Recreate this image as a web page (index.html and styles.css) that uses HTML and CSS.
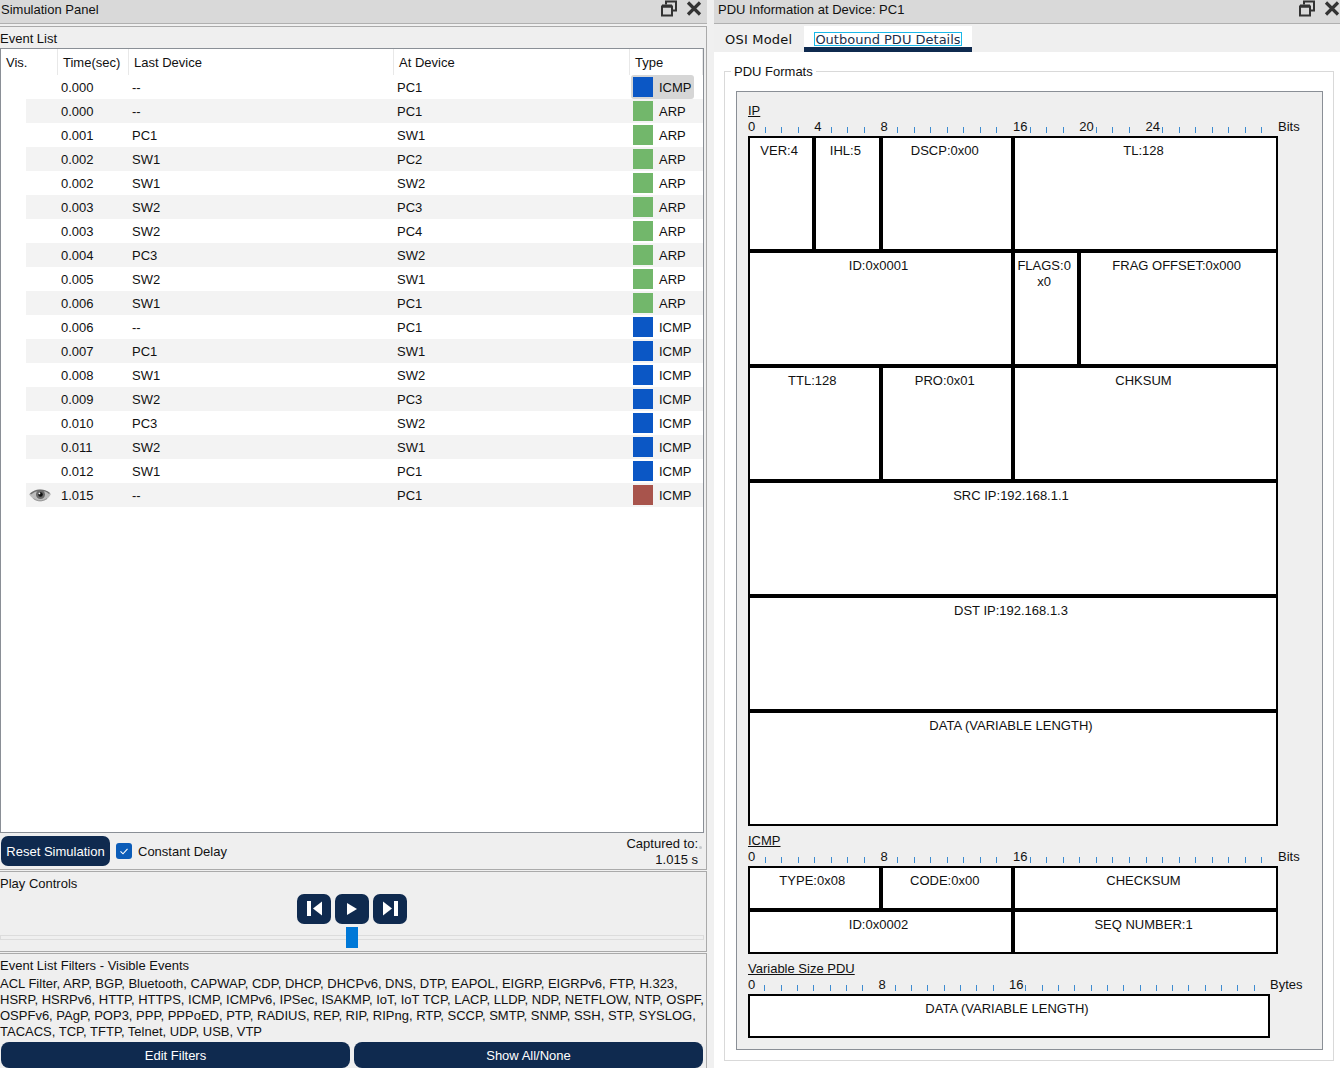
FILE: index.html
```html
<!DOCTYPE html>
<html lang="en">
<head>
<meta charset="utf-8">
<title>Simulation Panel</title>
<link rel="stylesheet" href="styles.css">
</head>
<body>
<div class="app">
  <section class="sim">
    <header class="titlebar">
      <span class="title">Simulation Panel</span>
      <span class="winbtns">
        <svg class="ico" viewBox="0 0 16 16"><path d="M5 4V1h10v9h-4" fill="none" stroke="#333" stroke-width="2"/><path d="M1 6h10v9H1z" fill="none" stroke="#333" stroke-width="2"/><path d="M1 5.500h10" stroke="#333" stroke-width="3"/></svg>
        <svg class="ico" viewBox="0 0 16 16"><path d="M2 2l12 12M14 2L2 14" stroke="#333" stroke-width="3.200" fill="none"/></svg>
      </span>
    </header>
    <div class="event-group">
      <div class="glabel evlabel">Event List</div>
      <div class="table">
        <div class="thead"><span>Vis.</span><span>Time(sec)</span><span>Last Device</span><span>At Device</span><span>Type</span></div>
        <div class="row"><span></span><span>0.000</span><span>--</span><span>PC1</span><span class="ty chip"><i class="sw icmp"></i>ICMP</span></div>
        <div class="row alt"><span></span><span>0.000</span><span>--</span><span>PC1</span><span class="ty"><i class="sw arp"></i>ARP</span></div>
        <div class="row"><span></span><span>0.001</span><span>PC1</span><span>SW1</span><span class="ty"><i class="sw arp"></i>ARP</span></div>
        <div class="row alt"><span></span><span>0.002</span><span>SW1</span><span>PC2</span><span class="ty"><i class="sw arp"></i>ARP</span></div>
        <div class="row"><span></span><span>0.002</span><span>SW1</span><span>SW2</span><span class="ty"><i class="sw arp"></i>ARP</span></div>
        <div class="row alt"><span></span><span>0.003</span><span>SW2</span><span>PC3</span><span class="ty"><i class="sw arp"></i>ARP</span></div>
        <div class="row"><span></span><span>0.003</span><span>SW2</span><span>PC4</span><span class="ty"><i class="sw arp"></i>ARP</span></div>
        <div class="row alt"><span></span><span>0.004</span><span>PC3</span><span>SW2</span><span class="ty"><i class="sw arp"></i>ARP</span></div>
        <div class="row"><span></span><span>0.005</span><span>SW2</span><span>SW1</span><span class="ty"><i class="sw arp"></i>ARP</span></div>
        <div class="row alt"><span></span><span>0.006</span><span>SW1</span><span>PC1</span><span class="ty"><i class="sw arp"></i>ARP</span></div>
        <div class="row"><span></span><span>0.006</span><span>--</span><span>PC1</span><span class="ty"><i class="sw icmp"></i>ICMP</span></div>
        <div class="row alt"><span></span><span>0.007</span><span>PC1</span><span>SW1</span><span class="ty"><i class="sw icmp"></i>ICMP</span></div>
        <div class="row"><span></span><span>0.008</span><span>SW1</span><span>SW2</span><span class="ty"><i class="sw icmp"></i>ICMP</span></div>
        <div class="row alt"><span></span><span>0.009</span><span>SW2</span><span>PC3</span><span class="ty"><i class="sw icmp"></i>ICMP</span></div>
        <div class="row"><span></span><span>0.010</span><span>PC3</span><span>SW2</span><span class="ty"><i class="sw icmp"></i>ICMP</span></div>
        <div class="row alt"><span></span><span>0.011</span><span>SW2</span><span>SW1</span><span class="ty"><i class="sw icmp"></i>ICMP</span></div>
        <div class="row"><span></span><span>0.012</span><span>SW1</span><span>PC1</span><span class="ty"><i class="sw icmp"></i>ICMP</span></div>
        <div class="row alt"><span class="eye"><svg class="eyeico" viewBox="0 0 22 14"><path d="M0 6.500C4 1 16-.5 22 6c-1 1.500-2 3.500-4 5-4 3-9 3-13 .5C3 10 1.500 8 0 6.500z" fill="#bdbdbd"/><path d="M1.500 6C6 1.500 15 .5 20.500 5.500" fill="none" stroke="#6e6e6e" stroke-width="1.400"/><circle cx="11.500" cy="6.500" r="4.500" fill="#6a6a6a"/><circle cx="11.500" cy="6.500" r="2.300" fill="#111"/><circle cx="10.400" cy="5.400" r=".9" fill="#fff"/><path d="M4.500 10.500c4 3 9 3 13.500 0" fill="none" stroke="#979797"/></svg></span><span>1.015</span><span>--</span><span>PC1</span><span class="ty"><i class="sw red"></i>ICMP</span></div>
      </div>
      <div class="simfoot">
        <button class="btn reset">Reset Simulation</button>
        <span class="check"><svg viewBox="0 0 16 16"><path d="M4.500 8.300l2.500 2.500 4.500-5" fill="none" stroke="#fff" stroke-width="1.100"/></svg></span>
        <span class="checklabel">Constant Delay</span>
        <span class="captured">Captured to:<br>1.015 s</span>
        <i class="grip"></i>
      </div>
    </div>
    <div class="play-group">
      <div class="glabel">Play Controls</div>
      <div class="playbtns">
        <button class="pbtn"><svg viewBox="0 0 34 30"><rect x="10" y="7" width="4" height="15" fill="#fff"/><path d="M25 7.500v14L16 14.500z" fill="#fff"/></svg></button>
        <button class="pbtn"><svg viewBox="0 0 34 30"><path d="M12 9v12l10-6z" fill="#fff"/></svg></button>
        <button class="pbtn"><svg viewBox="0 0 34 30"><path d="M10 7.500v14l9-7z" fill="#fff"/><rect x="21" y="7" width="4" height="15" fill="#fff"/></svg></button>
      </div>
      <div class="slider"><div class="track"></div><div class="thumb"></div></div>
    </div>
    <div class="filter-group">
      <div class="glabel">Event List Filters - Visible Events</div>
      <p class="filters">ACL Filter, ARP, BGP, Bluetooth, CAPWAP, CDP, DHCP, DHCPv6, DNS, DTP, EAPOL, EIGRP, EIGRPv6, FTP, H.323,<br>HSRP, HSRPv6, HTTP, HTTPS, ICMP, ICMPv6, IPSec, ISAKMP, IoT, IoT TCP, LACP, LLDP, NDP, NETFLOW, NTP, OSPF,<br>OSPFv6, PAgP, POP3, PPP, PPPoED, PTP, RADIUS, REP, RIP, RIPng, RTP, SCCP, SMTP, SNMP, SSH, STP, SYSLOG,<br>TACACS, TCP, TFTP, Telnet, UDP, USB, VTP</p>
      <div class="filterbtns"><button class="btn wide">Edit Filters</button><button class="btn wide">Show All/None</button></div>
    </div>
  </section>

  <section class="pdu">
    <header class="titlebar right">
      <span class="title">PDU Information at Device: PC1</span>
      <span class="winbtns">
        <svg class="ico" viewBox="0 0 16 16"><path d="M5 4V1h10v9h-4" fill="none" stroke="#333" stroke-width="2"/><path d="M1 6h10v9H1z" fill="none" stroke="#333" stroke-width="2"/><path d="M1 5.500h10" stroke="#333" stroke-width="3"/></svg>
        <svg class="ico" viewBox="0 0 16 16"><path d="M2 2l12 12M14 2L2 14" stroke="#333" stroke-width="3.200" fill="none"/></svg>
      </span>
    </header>
    <nav class="tabs">
      <span class="tab">OSI Model</span>
      <span class="tab active"><span class="focus">Outbound PDU Details</span></span>
    </nav>
    <div class="tabbody">
      <fieldset class="formats">
        <legend>PDU Formats</legend>
        <div class="panel">
          <div class="ptitle">IP</div>
          <div class="ruler">
            <div class="ticks">
              <b>0</b><i></i><i></i><i></i><b>4</b><i></i><i></i><i></i><b>8</b><i></i><i></i><i></i><i></i><i></i><i></i><i></i><b>16</b><i></i><i></i><i></i><b>20</b><i></i><i></i><i></i><b>24</b><i></i><i></i><i></i><i></i><i></i><i></i><i></i>
            </div>
            <span class="unit">Bits</span>
          </div>
          <div class="pgrid ip">
            <div class="c s4">VER:4</div><div class="c s4">IHL:5</div><div class="c s8">DSCP:0x00</div><div class="c s16">TL:128</div>
            <div class="c s16">ID:0x0001</div><div class="c s4">FLAGS:0<br>x0</div><div class="c s12">FRAG OFFSET:0x000</div>
            <div class="c s8">TTL:128</div><div class="c s8">PRO:0x01</div><div class="c s16">CHKSUM</div>
            <div class="c s32">SRC IP:192.168.1.1</div>
            <div class="c s32">DST IP:192.168.1.3</div>
            <div class="c s32">DATA (VARIABLE LENGTH)</div>
          </div>
          <div class="ptitle after">ICMP</div>
          <div class="ruler">
            <div class="ticks">
              <b>0</b><i></i><i></i><i></i><i></i><i></i><i></i><i></i><b>8</b><i></i><i></i><i></i><i></i><i></i><i></i><i></i><b>16</b><i></i><i></i><i></i><i></i><i></i><i></i><i></i><i></i><i></i><i></i><i></i><i></i><i></i><i></i><i></i>
            </div>
            <span class="unit">Bits</span>
          </div>
          <div class="pgrid icmpg">
            <div class="c s8">TYPE:0x08</div><div class="c s8">CODE:0x00</div><div class="c s16">CHECKSUM</div>
            <div class="c s16">ID:0x0002</div><div class="c s16">SEQ NUMBER:1</div>
          </div>
          <div class="ptitle after">Variable Size PDU</div>
          <div class="ruler var">
            <div class="ticks">
              <b>0</b><i></i><i></i><i></i><i></i><i></i><i></i><i></i><b>8</b><i></i><i></i><i></i><i></i><i></i><i></i><i></i><b>16</b><i></i><i></i><i></i><i></i><i></i><i></i><i></i><i></i><i></i><i></i><i></i><i></i><i></i><i></i><i></i>
            </div>
            <span class="unit">Bytes</span>
          </div>
          <div class="pgrid vargrid">
            <div class="c s32">DATA (VARIABLE LENGTH)</div>
          </div>
        </div>
      </fieldset>
    </div>
  </section>
</div>
</body>
</html>
```

FILE: styles.css
```css
* { box-sizing: border-box; }
html, body { margin: 0; padding: 0; }
body {
  width: 1340px; height: 1068px; overflow: hidden;
  background: #f0f0f0; color: #111;
  font: 13px/16px "Liberation Sans", Arial, sans-serif;
}
button { font: inherit; border: 0; padding: 0; cursor: pointer; }
.app { display: flex; height: 1068px; }

/* ---------- shared ---------- */
.sim { width: 707px; display: flex; flex-direction: column; }
.pdu { width: 626px; margin-left: 7px; display: flex; flex-direction: column; }
.titlebar {
  height: 24px; flex: none; display: flex; justify-content: space-between;
  background: #d9d9d9; border-bottom: 1px solid #b0b0b0; padding: 0 5px 0 1px;
}
.titlebar.right { padding-left: 4px; padding-right: 0; }
.title { padding-top: 2px; }
.winbtns { display: flex; gap: 9px; }
.ico { width: 16px; height: 17px; display: block; }
.glabel { height: 16px; padding-top: 1px; line-height: 16px; }

/* ---------- event list ---------- */
.event-group {
  flex: 1; margin-top: 2px; display: flex; flex-direction: column; min-height: 0;
  border-top: 1px solid #aaa; border-right: 1px solid #aaa; border-bottom: 1px solid #aaa;
  background: #efefef; width: 707px;
}
.evlabel { margin-top: 3px; height: 18px; }
.table {
  width: 704px; height: 785px; background: #fff;
  border: 1px solid #8a8f96; flex: none;
}
.thead {
  display: grid; grid-template-columns: 57px 71px 265px 236px 73px; height: 26px;
}
.thead span { padding: 6px 0 0 5px; border-right: 1px solid #e8e8e8; }
.row {
  margin-left: 25px; height: 24px; line-height: 26px;
  display: grid; grid-template-columns: 31px 71px 265px 236px 74px; grid-template-rows: 24px;
}
.row.alt { background: #f3f3f3; }
.row span { padding-left: 4px; }
.row span.ty { display: flex; align-items: flex-start; gap: 6px; }
.row span.chip { background: #d6d6d6; border-radius: 3px; margin-left: 2px; padding-left: 2px; width: 63px; }
.row span.eye { padding: 5px 0 0 3px; }
.eyeico { display: block; width: 22px; height: 14px; }
.sw { width: 20px; height: 20px; display: block; flex: none; margin-top: 2px; }
.icmp { background: #0b57c5; }
.arp { background: #72b76b; }
.red { background: #a8544c; }

.simfoot { height: 36px; flex: none; display: flex; align-items: center; position: relative; padding-left: 1px; }
.btn { background: #0f2a4f; color: #fff; border-radius: 7px; padding-top: 2px; }
.reset { width: 109px; height: 30px; }
.check {
  width: 16px; height: 16px; margin-left: 6px; border-radius: 3px; background: #0b5cb8; display: block;
}
.check svg { display: block; width: 16px; height: 16px; }
.checklabel { margin-left: 6px; padding-top: 2px; }
.captured { margin-left: auto; margin-right: 8px; text-align: right; padding-top: 2px; }
.grip {
  position: absolute; left: 699px; top: 13px; width: 3px; height: 3px; background: #c4c8cc; border-radius: 50%;
}

/* ---------- play ---------- */
.play-group {
  height: 81px; flex: none; margin-top: 1px; padding-top: 3px; width: 707px;
  border-top: 1px solid #aaa; border-right: 1px solid #aaa; border-bottom: 1px solid #aaa;
  background: #efefef;
}
.playbtns { display: flex; justify-content: center; gap: 4px; margin-top: 3px; height: 30px; padding-right: 2px; }
.pbtn { width: 34px; height: 30px; background: #0f2a4f; border-radius: 7px; }
.pbtn svg { display: block; width: 34px; height: 30px; }
.slider { position: relative; height: 24px; margin-top: 3px; }
.track { height: 5px; position: relative; top: 8px; width: 704px; background: #efefef; border: 1px solid #dcdcdc; }
.thumb { position: absolute; left: 346px; top: 0; width: 12px; height: 21px; background: #0078d7; }

/* ---------- filters ---------- */
.filter-group {
  flex: none; height: 115px; margin-top: 1px; padding-top: 3px; width: 707px;
  border-top: 1px solid #aaa; border-right: 1px solid #aaa;
  background: #efefef;
}
.filters { margin: 3px 0 0; white-space: nowrap; }
.filterbtns { display: flex; gap: 4px; padding: 0 1px; margin-top: 2px; width: 704px; }
.wide { flex: 1; height: 26px; border-radius: 8px; }

/* ---------- tabs ---------- */
.tabs { height: 28px; flex: none; background: #efefef; display: flex; align-items: flex-end; }
.tab {
  height: 26px; font: 13px/16px "DejaVu Sans", sans-serif; padding-top: 6px; margin-left: 11px; width: 79px;
  letter-spacing: .2px;
}
.tab.active {
  margin-left: 0; width: 168px; background: #fff; border-bottom: 5px solid #0f2a4f; padding: 6px 0 0 10px;
  letter-spacing: 0;
}
.focus { display: block; width: 148px; height: 14px; border: 1px solid #1ab8e8; line-height: 14px; text-align: center; color: #1c2f4a; }

/* ---------- pdu ---------- */
.tabbody { flex: 1; background: #fff; padding: 11px 6px 0 10px; }
.formats {
  margin: 0; min-width: 0; border: 1px solid #d9d9d9; padding: 12px 10px 10px 11px; height: 998px;
}
.formats legend { padding: 0 3px; margin-left: -5px; height: 16px; line-height: 18px; }
.panel {
  background: #efefef; border: 1px solid #8a8f96; padding: 11px 0 11px 11px; height: 959px;
}
.ptitle { height: 16px; text-decoration: underline; }
.ptitle.after { margin-top: 7px; }
.ruler { height: 17px; display: flex; }
.ticks { width: 530px; height: 17px; flex: none; display: grid; grid-template-columns: repeat(32, 1fr); grid-template-rows: 17px; }
.var .ticks { width: 522px; }
.ticks b { font-weight: 400; white-space: nowrap; }
.ticks i { display: block; width: 1px; height: 6px; margin-top: 8px; background: #3d8bd0; }
.pgrid {
  background: #000; padding: 2px; display: grid; gap: 4px; width: 530px;
  grid-template-columns: repeat(32, 1fr);
}
.ip { grid-auto-rows: 111px; }
.icmpg { grid-auto-rows: 40px; }
.vargrid { width: 522px; grid-auto-rows: 40px; }
.c { background: #fff; text-align: center; padding: 5px 4px 0 0; overflow: hidden; }
.s4 { grid-column: span 4; }
.s8 { grid-column: span 8; }
.s12 { grid-column: span 12; }
.s16 { grid-column: span 16; }
.s32 { grid-column: span 32; }
```
